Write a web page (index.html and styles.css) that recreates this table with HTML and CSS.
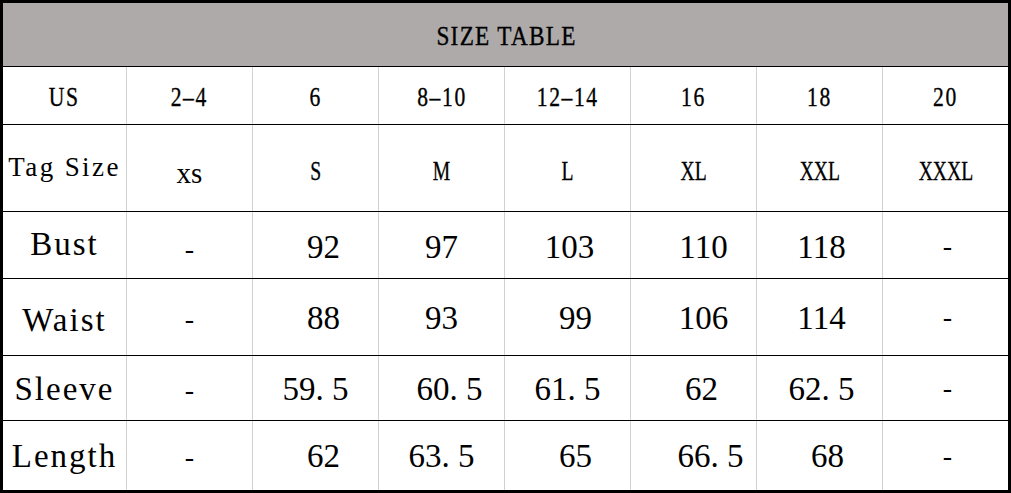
FILE: index.html
```html
<!DOCTYPE html>
<html>
<head>
<meta charset="utf-8">
<link rel="stylesheet" href="styles.css">
</head>
<body>
<div class="sheet">
  <div class="title"><span class="sq">SIZE TABLE</span></div>
  <div class="row row-us">
    <div class="cell"><span class="sq">US</span></div>
    <div class="cell"><span class="sq">2–4</span></div>
    <div class="cell"><span class="sq">6</span></div>
    <div class="cell"><span class="sq">8–10</span></div>
    <div class="cell"><span class="sq">12–14</span></div>
    <div class="cell"><span class="sq">16</span></div>
    <div class="cell"><span class="sq">18</span></div>
    <div class="cell"><span class="sq">20</span></div>
  </div>
  <div class="row row-tag">
    <div class="cell label-tag">Tag Size</div>
    <div class="cell lower">xs</div>
    <div class="cell"><span class="sq">S</span></div>
    <div class="cell"><span class="sq">M</span></div>
    <div class="cell"><span class="sq">L</span></div>
    <div class="cell"><span class="sq">XL</span></div>
    <div class="cell"><span class="sq">XXL</span></div>
    <div class="cell"><span class="sq">XXXL</span></div>
  </div>
  <div class="row data row-bust">
    <div class="cell label">Bust</div>
    <div class="cell dash">-</div>
    <div class="cell s8">92</div>
    <div class="cell">97</div>
    <div class="cell s2">103</div>
    <div class="cell s10">110</div>
    <div class="cell s2">118</div>
    <div class="cell dash last">-</div>
  </div>
  <div class="row data row-waist">
    <div class="cell label">Waist</div>
    <div class="cell dash">-</div>
    <div class="cell s8">88</div>
    <div class="cell">93</div>
    <div class="cell s8">99</div>
    <div class="cell s10">106</div>
    <div class="cell s2">114</div>
    <div class="cell dash last">-</div>
  </div>
  <div class="row data row-sleeve">
    <div class="cell label">Sleeve</div>
    <div class="cell dash">-</div>
    <div class="cell">59. 5</div>
    <div class="cell s8">60. 5</div>
    <div class="cell">61. 5</div>
    <div class="cell s8">62</div>
    <div class="cell s2">62. 5</div>
    <div class="cell dash last">-</div>
  </div>
  <div class="row data row-length">
    <div class="cell label">Length</div>
    <div class="cell dash">-</div>
    <div class="cell s8">62</div>
    <div class="cell">63. 5</div>
    <div class="cell s8">65</div>
    <div class="cell s17">66. 5</div>
    <div class="cell s8">68</div>
    <div class="cell dash last">-</div>
  </div>
</div>
</body>
</html>
```

FILE: styles.css
```css
html, body {
  margin: 0;
  padding: 0;
  background: #ffffff;
}

.sheet {
  box-sizing: border-box;
  width: 1011px;
  height: 493px;
  border: 3px solid #000000;
  display: grid;
  grid-template-rows: 63px 58px 87px 67px 77px 65px 70px;
  font-family: "Liberation Serif", "Times New Roman", serif;
  color: #000000;
  white-space: pre;
}

.sq {
  display: inline-block;
  transform: scaleX(0.8);
  -webkit-text-stroke: 0.35px #000;
}

.title {
  background: #aeaaaa;
  display: flex;
  align-items: center;
  justify-content: center;
  font-size: 27px;
  padding-top: 4px;
  padding-left: 3px;
}

.title .sq {
  transform: scaleX(0.86);
  letter-spacing: 1.5px;
}

.row {
  display: grid;
  grid-template-columns: 123px repeat(7, 126px);
  border-top: 1px solid #000000;
}

.cell {
  box-sizing: border-box;
  display: flex;
  align-items: center;
  justify-content: center;
  border-left: 1px solid #d2d2d2;
}

.cell:first-child {
  border-left: none;
}

.row-us .cell {
  font-size: 27px;
  padding-top: 3px;
}

.row-us .sq {
  letter-spacing: 2px;
  transform: scaleX(0.8);
}

.row-tag .cell {
  font-size: 28px;
  padding-top: 6px;
}

.row-tag .sq {
  transform: scaleX(0.7);
}

.row-tag .lower {
  font-size: 29px;
  padding-top: 10px;
}

.row-tag .label-tag {
  font-size: 27px;
  letter-spacing: 2.4px;
  padding-top: 0;
  padding-bottom: 2px;
}

.data .cell {
  font-size: 33px;
}

.data .label {
  letter-spacing: 2px;
}

.row-bust .cell { padding-top: 4px; }
.row-bust .label { padding-top: 0; padding-bottom: 1px; }
.row-waist .cell { padding-top: 2px; }
.row-waist .label { padding-top: 7px; }
.row-sleeve .cell { padding-top: 2px; }
.row-length .cell { padding-top: 1px; }

.data .dash {
  font-size: 28px;
  padding-left: 0;
}
.row-bust .dash { padding-top: 8px; }
.row-waist .dash { padding-top: 4px; }
.row-sleeve .dash { padding-top: 4px; }
.row-length .dash { padding-top: 3px; }
.data .dash.last { padding-top: 0; padding-left: 4px; }
.row-bust .dash.last { padding-top: 2px; }

.s2 { padding-left: 4px; }
.s8 { padding-left: 16px; }
.s10 { padding-left: 20px; }
.s17 { padding-left: 34px; }
```
